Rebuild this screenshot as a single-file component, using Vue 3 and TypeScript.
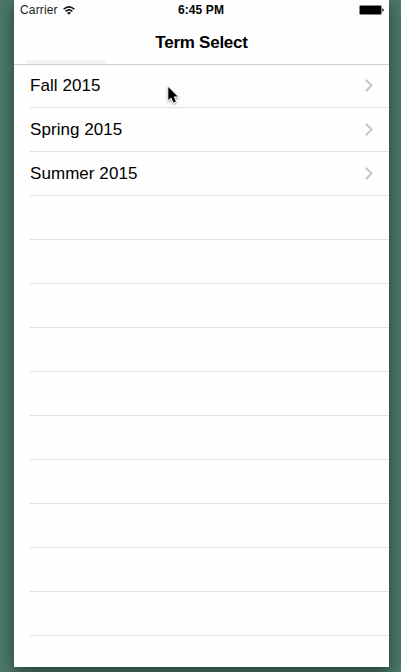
<script setup lang="ts">
interface Term {
  id: number
  name: string
}

const terms: Term[] = [
  { id: 1, name: 'Fall 2015' },
  { id: 2, name: 'Spring 2015' },
  { id: 3, name: 'Summer 2015' },
]

const emptyRows = 10
</script>

<template>
  <div class="desktop">
    <main class="phone">
      <header class="header">
        <div class="status">
          <div class="carrier">
            <span>Carrier</span>
            <svg class="wifi" width="12" height="9" viewBox="0 0 12 9" fill="none" stroke="#111" stroke-width="1.5">
              <path d="M0.6 3.3Q6 -1.6 11.4 3.3" />
              <path d="M2.6 5.4Q6 2.4 9.4 5.4" />
              <path d="M6 8.8L4 6.8Q6 5.4 8 6.8Z" fill="#111" stroke="none" />
            </svg>
          </div>
          <span class="time">6:45 PM</span>
          <svg class="battery" width="25" height="10" viewBox="0 0 25 10">
            <rect x="0.5" y="0.5" width="22" height="9" rx="1.3" fill="#000" stroke="#858585" />
            <path d="M23.3 3.2Q24.8 3.7 24.8 5T23.3 6.8Z" fill="#111" />
          </svg>
        </div>
        <h1 class="title">Term Select</h1>
        <div class="underlay"></div>
      </header>
      <ul class="list">
        <li v-for="term in terms" :key="term.id" class="row">
          <span class="name">{{ term.name }}</span>
          <svg class="chevron" width="9" height="13" viewBox="0 0 9 13" fill="none" stroke="#c7c7cc" stroke-width="2">
            <path d="M0.8 0.7L6.6 6.5L0.8 12.3" />
          </svg>
        </li>
        <li v-for="n in emptyRows" :key="'empty-' + n" class="row"></li>
      </ul>
      <svg class="cursor" width="18" height="22" viewBox="0 0 18 22">
        <path
          d="M3.3 2V15.1L6.2 12.4L8.6 17.5L10.9 16.4L8.7 11.5H12.7Z"
          fill="#000"
          stroke="#fff"
          stroke-width="1.8"
          paint-order="stroke"
        />
      </svg>
    </main>
  </div>
</template>

<style>
body {
  margin: 0;
}
</style>

<style scoped>
.desktop {
  box-sizing: border-box;
  width: 401px;
  height: 672px;
  padding: 0 12px 5px 14px;
  overflow: hidden;
  background: #4c776b;
  font-family: "Liberation Sans", Arial, sans-serif;
  color: #000;
}

.phone {
  position: relative;
  width: 375px;
  height: 667px;
  background: #fefefe;
  box-shadow: 0 5px 14px rgba(0, 0, 0, 0.48);
}

.header {
  box-sizing: border-box;
  display: flex;
  flex-direction: column;
  height: 64px;
  box-shadow: 0 1px 0 #d0d0d2;
}

.status {
  display: grid;
  grid-template-columns: 1fr auto 1fr;
  align-items: center;
  height: 20px;
  padding: 0 5px 0 6px;
  font-size: 12px;
}

.carrier {
  display: flex;
  align-items: center;
  gap: 5px;
  letter-spacing: 0.15px;
  color: #222;
}

.time {
  margin-right: 2px;
  font-weight: 700;
  letter-spacing: 0.12px;
}

.battery {
  justify-self: end;
}

.title {
  margin: 0;
  height: 40px;
  line-height: 46px;
  text-align: center;
  font-size: 17px;
  font-weight: 700;
  letter-spacing: -0.25px;
}

.underlay {
  width: 80px;
  height: 4px;
  margin-left: 12px;
  background: #f4f4f4;
}

.list {
  margin: 0;
  padding: 0 0 0 16px;
  list-style: none;
}

.row {
  box-sizing: border-box;
  display: flex;
  align-items: center;
  justify-content: space-between;
  height: 44px;
  padding-right: 15px;
  border-bottom: 1px solid #e0e0e2;
  font-size: 17px;
  letter-spacing: 0.06px;
}

.cursor {
  position: absolute;
  left: 151px;
  top: 84.5px;
  filter: drop-shadow(0 1px 1px rgba(0, 0, 0, 0.4));
}
</style>
